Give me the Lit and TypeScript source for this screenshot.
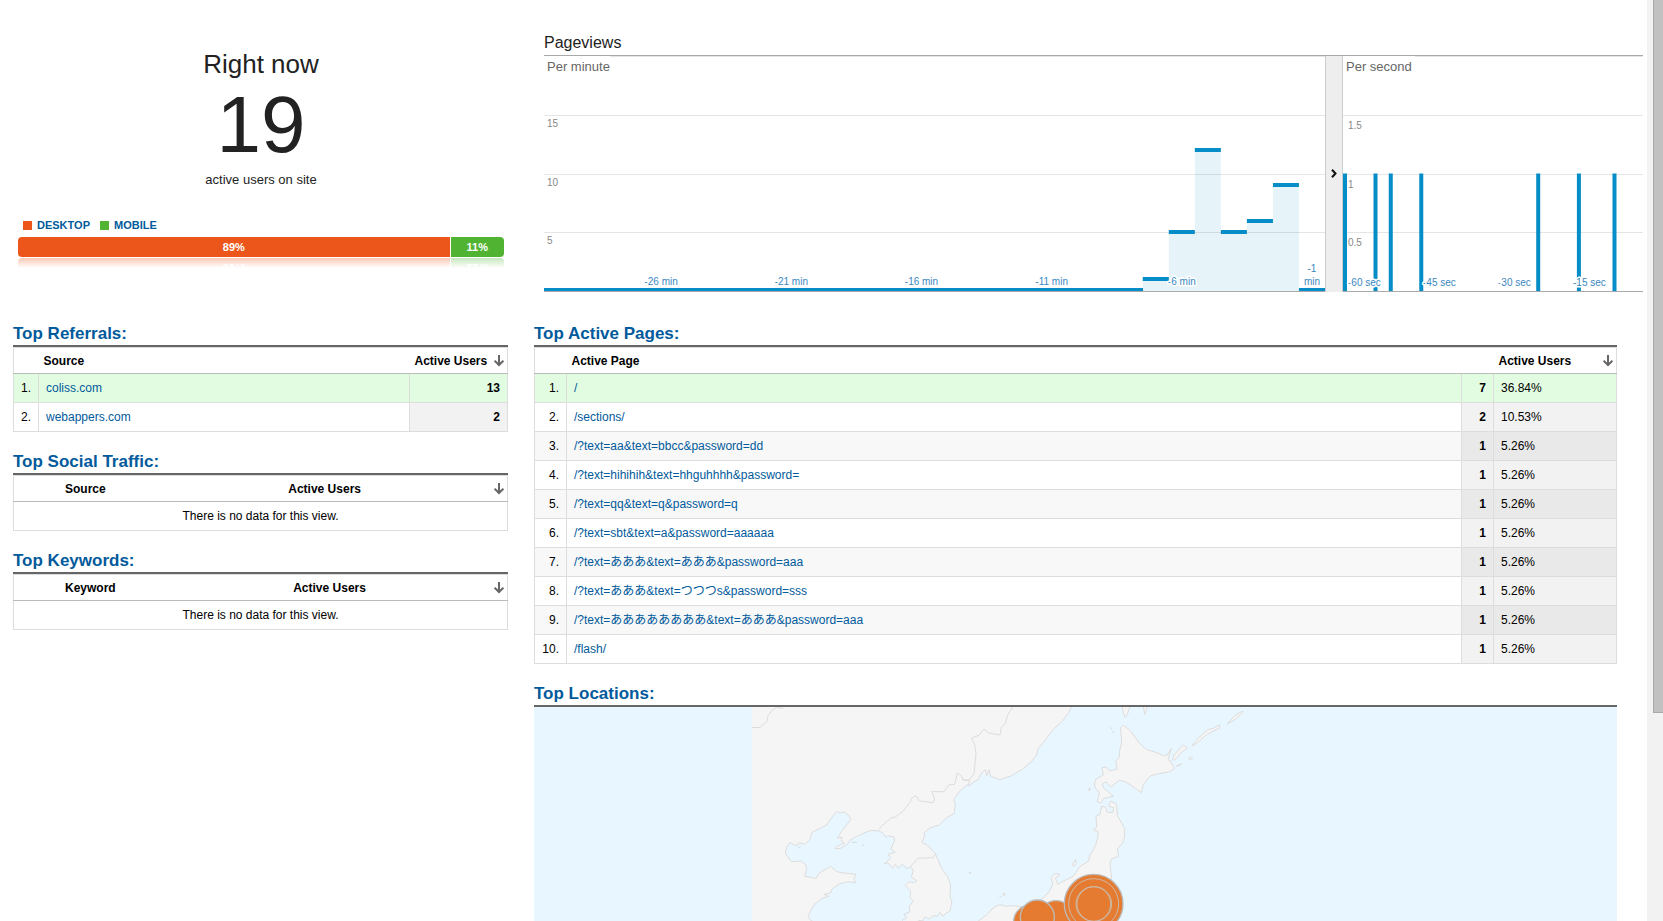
import { LitElement, html, svg, css } from "lit";
import { customElement, property } from "lit/decorators.js";

const FONT = css`"Liberation Sans", Arial, "Noto Sans CJK JP", sans-serif`;
const PLOT_H = 236;

const MINUTES = [...Array(22).fill(0), 1, 5, 12, 5, 6, 9, 0];
const MINUTE_SLOTS = 30;
const SECOND_SLOTS = 59;
const SECONDS = [0, 6, 9, 15, 38, 46, 53];

const headingStyles = css`
  .heading { margin: 0; padding: 0 0 1px; font-size: 17px; line-height: 20px; border-bottom: 2px solid #666; }
  a { color: #015a9c; text-decoration: none; }
`;

@customElement("sort-arrow")
class SortArrow extends LitElement {
  static styles = css`
    :host { display: inline-flex; vertical-align: middle; }
    .sort { display: flex; padding: 0; border: 0; background: none; cursor: pointer; }
  `;
  render() {
    return html`<button class="sort" aria-label="Sort by active users">
      <svg width="10" height="12" viewBox="0 0 10 12" fill="none" stroke="#666" stroke-width="2">
        <path d="M5 0v10M0.6 5.6 5 10l4.4-4.4" />
      </svg>
    </button>`;
  }
}

@customElement("pageviews-chart")
class PageviewsChart extends LitElement {
  static styles = css`
    :host { display: block; font-family: ${FONT}; }
    .title { margin: 0; padding: 0 0 3px; font-size: 16px; line-height: 18px; font-weight: 400; color: #222; border-bottom: 1px solid #aaa; }
    .plots { display: grid; grid-template-columns: minmax(0, 781fr) 18px minmax(0, 300fr); }
    .plot { display: block; width: 100%; height: 236px; }
    .divider { display: flex; align-items: center; justify-content: center; padding: 0 0 2px; border: 1px solid #ccc; border-width: 0 1px; background: #eee; cursor: pointer; }
    .grid { stroke: #000; stroke-opacity: 0.1; }
    .base { stroke: #aaa; }
    .name { font-size: 13px; fill: #666; }
    .value { font-size: 10px; fill: #888; }
    .tick { font-size: 10px; fill: #3a87c0; stroke: #fff; stroke-width: 3px; paint-order: stroke; stroke-linejoin: round; }
    .middle { text-anchor: middle; }
    .area { fill: #058dc7; fill-opacity: 0.1; }
    .mark { fill: #058dc7; }
  `;
  render() {
    const y = (v: number) => PLOT_H - 1 - (v * (PLOT_H - 1)) / 20;
    const pct = (i: number, of: number) => `${(i * 100) / of}%`;
    const lines = [5, 10, 15, 20].map((v) => svg`<line class="grid" x1="0" x2="100%" y1=${Math.round(y(v)) + 0.5} y2=${Math.round(y(v)) + 0.5} />`);
    const base = svg`<line class="base" x1="0" x2="100%" y1=${PLOT_H - 0.5} y2=${PLOT_H - 0.5} />`;
    const first = MINUTE_SLOTS - MINUTES.length;
    return html`
      <h2 class="title">Pageviews</h2>
      <div class="plots">
        <svg class="plot" role="img" aria-label="Pageviews per minute">
          ${lines} ${base}
          ${MINUTES.map((v, n) => svg`<rect class="area" x=${pct(n + first, MINUTE_SLOTS)} width=${pct(1, MINUTE_SLOTS)} y=${y(v)} height=${PLOT_H - 1 - y(v)} />`)}
          <rect class="mark" x="0" width="76.7%" y=${PLOT_H - 4} height="3" />
          ${MINUTES.map((v, n) => svg`<rect class="mark" x=${pct(n + first, MINUTE_SLOTS)} width=${pct(1, MINUTE_SLOTS)} y=${v ? Math.round(y(v)) - 2 : PLOT_H - 4} height=${v ? 4 : 3} />`)}
          <rect x="0" y="0" width="66" height="20" fill="#fff" />
          <text class="name" x="3" y="15">Per minute</text>
          ${[15, 10, 5].map((v) => svg`<text class="value" x="3" y=${Math.round(y(v)) + 12}>${v}</text>`)}
          ${[26, 21, 16, 11, 6].map((m) => svg`<text class="tick middle" x=${pct(MINUTE_SLOTS - m + 0.5, MINUTE_SLOTS)} y="229">-${m} min</text>`)}
          <text class="tick middle" x=${pct(29.5, 30)} y="216">-1</text>
          <text class="tick middle" x=${pct(29.5, 30)} y="229">min</text>
        </svg>
        <button class="divider" aria-label="Collapse per second chart">
          <svg width="6" height="9" viewBox="0 0 6 9" fill="none" stroke="#111" stroke-width="2"><path d="M1 0.7 4.5 4.5 1 8.3" /></svg>
        </button>
        <svg class="plot" role="img" aria-label="Pageviews per second">
          ${lines} ${base}
          ${SECONDS.map((s) => svg`<rect class="mark" x=${pct(s, SECOND_SLOTS)} width="4" y=${y(10)} height=${PLOT_H - 1 - y(10)} />`)}
          <rect x="0" y="0" width="72" height="20" fill="#fff" />
          <text class="name" x="3" y="15">Per second</text>
          ${[1.5, 1, 0.5].map((v) => svg`<text class="value" x="5" y=${Math.round(y(v * 10)) + 14}>${v}</text>`)}
          ${[60, 45, 30, 15].map((s) => svg`<text class="tick" x=${pct(s === 60 ? 1 : 61 - s, 60)} y="230">-${s} sec</text>`)}
        </svg>
      </div>
    `;
  }
}

@customElement("location-map")
class LocationMap extends LitElement {
  static styles = css`
    :host { display: block; background: #e8f6ff; }
    .map { display: block; width: 100%; }
    .land { fill: #f5f5f5; stroke: #dcdcdc; stroke-width: 3; stroke-linejoin: round; }
    .edge { fill: #f5f5f5; }
    .border { fill: none; stroke: #dcdcdc; stroke-width: 3; stroke-linejoin: round; }
    .pin { fill: #e47b30; stroke: #bbb; stroke-width: 4; }
    .ring { fill: none; stroke: #ccb9a6; stroke-width: 3; }
  `;
  render() {
    return html`<svg class="map" viewBox="534 706 1083 400" role="img" aria-label="Map of active users around Japan">
      <g transform="translate(740 700) scale(0.33333)">
        <path class="edge" d="M36 0H1000L994 18 985 36 968 60 940 85 915 118 893 145 890 162 874 182 848 204 815 224 780 236 760 230 752 222 747 206 740 224 722 215 714 236 700 243 680 252 660 270 641 296 646 310 642 338 620 350 598 372 572 380 553 394 553 408 545 424 562 432 586 458 604 500 622 526 632 552 630 588 636 600 630 630 608 645 592 636 575 650 555 652 536 663 520 668 497 668 500 650 510 632 508 616 520 600 510 590 512 570 496 554 506 542 526 545 514 528 520 510 510 498 488 490 462 500 444 486 434 488 452 470 444 460 466 454 452 444 464 420 462 408 444 404 430 398 418 390 392 388 372 396 350 406 330 418 322 430 302 434 298 446 286 443 290 436 306 434 304 420 294 412 304 392 320 372 332 356 328 346 312 332 290 332 278 346 260 372 216 394 210 416 196 430 180 426 166 434 150 424 140 438 136 456 154 482 184 480 196 490 200 505 194 526 228 532 238 516 262 502 272 496 290 512 312 516 348 520 344 544 328 542 300 548 276 564 266 582 246 592 222 612 204 644 210 656 222 664 230 1200H36Z"/>
        <path class="border" d="M994 18 985 36 968 60 940 85 915 118 893 145 890 162 874 182 848 204 815 224 780 236 762 229 752 226 747 206 740 224 736 206 722 220 714 236 700 243 690 254 680 252 660 270 641 296 646 310 642 338 620 350 598 372 572 380 553 394 553 408 545 424 562 432 586 458 604 500 622 526 632 552 630 588 636 600 630 630 620 636 608 645 600 634 592 646 580 644 568 654 555 648 548 660 536 658 530 670M497 668 486 658 500 650 492 640 510 632 508 616 520 600 510 590 512 570 496 554 506 542 522 545 530 540 514 528 520 510 512 496 500 504 488 490 474 502 466 490 458 502 444 486 434 488 452 470 444 460 466 454 452 444 464 420 462 408 444 404 438 410 430 398 418 390 392 388 372 396 350 406 330 418 322 430 302 442 286 443 290 436 314 426 304 420 306 408 292 412 304 392 320 372 332 356 328 346 312 332 304 336 290 332 278 346 260 372 216 394 210 416 196 430 180 426 166 434 150 424 140 438 136 456 154 482 184 480 196 490 200 505 194 526 228 532 238 516 262 502 272 496 290 512 312 516 330 518 348 520 342 534 346 546 328 542 300 548 276 564 272 576 252 580 266 586 246 592 222 612 204 644 210 656 222 664"/>
        <path class="border" d="M36 80 60 79 80 62 84 44 96 28 110 20 130 22M418 386 422 378 454 350 466 348 488 332 512 302 514 292 528 284 538 300 560 302 578 306 584 294 575 272 612 272 626 252 644 250 652 216 664 224 670 238 688 236 702 218 708 160 704 130 694 112 718 102 732 84 746 96 780 102 784 78 796 68 802 44 818 18M510 498 534 472 580 470 586 458M668 236 690 240 684 252"/>
        <path class="land" d="M1151 73 1142 79 1145 125 1139 148 1138 168 1127 182 1132 204 1110 210 1098 198 1086 200 1090 222 1068 234 1063 252 1068 264 1078 274 1072 302 1082 306 1092 292 1120 286 1104 272 1092 262 1086 250 1098 242 1112 258 1138 238 1156 242 1180 258 1204 275 1210 250 1232 224 1258 218 1290 212 1304 202 1296 190 1292 180 1284 176 1294 142 1282 162 1270 164 1248 154 1220 146 1198 126 1170 88Z"/>
        <path class="land" d="M1085 316 1080 340 1068 346 1070 378 1060 386 1074 392 1074 406 1066 436 1050 462 1046 480 1020 496 1000 526 970 540 954 550 946 532 960 520 944 518 934 530 938 550 926 574 906 594 880 610 850 618 820 614 795 616 792 613 774 612 756 624 742 640 726 652 700 672V760L1060 680 1090 590 1116 540 1110 490 1114 474 1136 466 1132 444 1148 426 1154 406 1154 382 1132 344 1130 310 1112 300 1106 316 1122 320 1118 334 1102 334 1096 318Z"/>
        <path class="land" d="M1147 16 1150 36 1156 49 1162 40 1170 16ZM1210 16 1214 40 1220 26 1220 16ZM1462 69 1482 46 1506 31 1510 32 1488 54ZM1356 134 1376 110 1404 86 1420 82 1438 72 1440 80 1416 92 1396 104 1372 126ZM1298 176 1302 162 1322 140 1330 132 1342 140 1322 156 1304 178ZM1345 172 1354 168 1358 172 1350 177ZM1308 196 1320 190 1326 188 1318 194ZM1110 76 1116 86M1116 90 1124 96M1044 266 1050 260 1050 268ZM998 490 1008 474 1006 482 1010 488 1000 496ZM687 515 692 513 690 518ZM778 590 784 584M788 580 794 576 794 584ZM334 424 350 424M366 432 372 434M174 440 182 436"/>
      </g>
      <g transform="translate(1000 700) scale(0.33333)">
        <circle class="pin" cx="91" cy="662" r="50"/>
        <circle class="pin" cx="168" cy="650" r="51"/>
        <circle class="pin" cx="112" cy="648" r="51"/>
        <circle class="pin" cx="281" cy="608" r="88"/>
        <circle class="ring" cx="281" cy="608" r="75"/>
        <circle class="ring" cx="280" cy="609" r="52"/>
        <circle class="ring" cx="283" cy="609" r="52"/>
      </g>
    </svg>`;
  }
}

interface Row { label: string; users: number; share?: string; }

@customElement("data-section")
class DataSection extends LitElement {
  @property() heading = "";
  @property() column = "";
  @property() kind = "list";
  @property({ attribute: false }) rows: Row[] = [];

  static styles = [headingStyles, css`
    :host { display: block; font-family: ${FONT}; font-size: 12px; line-height: 14px; color: #000; }
    .table { width: 100%; border-collapse: collapse; table-layout: fixed; }
    .table th, .table td { box-sizing: border-box; padding: 0 7px; border: 1px solid #ddd; height: 29px; text-align: left; }
    .table th { height: 26px; border-width: 1px 0; border-bottom-color: #bbb; padding: 0 5px; white-space: nowrap; }
    .table th:first-child { border-left: 1px solid #ddd; }
    .table th:last-child { border-right: 1px solid #ddd; padding-right: 3px; }
    .table .end { text-align: right; }
    .table .mid { text-align: center; }
    .index { width: 25px; }
    .wide .index { width: 32px; }
    .users { width: 98px; }
    .wide .users { width: 32px; }
    .share { width: 123px; }
    .table .num { font-weight: 700; text-align: right; background: #f2f2f2; }
    .pct { background: #f2f2f2; }
    .odd { background: #f8f8f8; }
    .odd .num, .odd .pct { background: #e9e9e9; }
    .lit, .lit .num, .lit .pct { background: #e1fce1; }
    .spread { display: flex; justify-content: space-between; align-items: center; }
    .source { width: 29%; }
    .keyword { width: 31%; }
    .table .icon { width: 15px; padding-left: 0; }
  `];

  private get head() {
    if (!this.rows.length) {
      return html`<tr>
        <th class="mid ${this.column === "Keyword" ? "keyword" : "source"}">${this.column}</th>
        <th class="mid">Active Users</th>
        <th class="end icon"><sort-arrow></sort-arrow></th>
      </tr>`;
    }
    if (this.kind === "wide") {
      return html`<tr><th class="index"></th><th>${this.column}</th><th class="users"></th>
        <th class="share"><div class="spread">Active Users<sort-arrow></sort-arrow></div></th></tr>`;
    }
    return html`<tr><th class="index"></th><th>${this.column}</th>
      <th class="users"><div class="spread">Active Users<sort-arrow></sort-arrow></div></th></tr>`;
  }

  render() {
    return html`
      <h2 class="heading"><a href="#">${this.heading}</a></h2>
      <table class="table ${this.kind}">
        <thead>${this.head}</thead>
        <tbody>
          ${this.rows.length
            ? this.rows.map((r, i) => html`<tr class=${i === 0 ? "lit" : i % 2 === 0 ? "odd" : ""}>
                <td class="end">${i + 1}.</td>
                <td><a href="#">${r.label}</a></td>
                <td class="num">${r.users}</td>
                ${r.share ? html`<td class="pct">${r.share}</td>` : null}
              </tr>`)
            : html`<tr><td class="mid" colspan="3">There is no data for this view.</td></tr>`}
        </tbody>
      </table>
    `;
  }
}

const REFERRALS: Row[] = [
  { label: "coliss.com", users: 13 },
  { label: "webappers.com", users: 2 },
];

const PAGES: Row[] = [
  { label: "/", users: 7, share: "36.84%" },
  { label: "/sections/", users: 2, share: "10.53%" },
  ...[
    "/?text=aa&text=bbcc&password=dd",
    "/?text=hihihih&text=hhguhhhh&password=",
    "/?text=qq&text=q&password=q",
    "/?text=sbt&text=a&password=aaaaaa",
    "/?text=あああ&text=あああ&password=aaa",
    "/?text=あああ&text=つつつs&password=sss",
    "/?text=ああああああああ&text=あああ&password=aaa",
    "/flash/",
  ].map((label) => ({ label, users: 1, share: "5.26%" })),
];

@customElement("app-root")
class AppRoot extends LitElement {
  static styles = [headingStyles, css`
    :host { display: flex; height: 100vh; overflow: hidden; background: #fff; font-family: ${FONT}; color: #222; }
    .page { flex: 1; min-width: 0; display: grid; grid-template-columns: minmax(0, 495fr) minmax(0, 1113fr); grid-template-rows: auto auto; align-content: start; column-gap: 26px; row-gap: 32px; padding-left: 13px; overflow: hidden; }
    .now { padding: 47px 4px 0 5px; text-align: center; }
    .caption { margin: 0; font-size: 26px; line-height: 34px; font-weight: 400; }
    .count { padding-top: 2px; font-size: 80px; line-height: 84px; }
    .note { font-size: 13px; line-height: 16px; padding-top: 5px; }
    .legend { display: flex; gap: 10px; padding: 30px 5px 5px; font-size: 11px; line-height: 14px; font-weight: 700; color: #015a9c; }
    .key { display: flex; align-items: center; gap: 5px; }
    .swatch { width: 9px; height: 9px; }
    .desktop { background: #ed561b; }
    .mobile { background: #50b432; }
    .bar { display: flex; gap: 1px; font-size: 11px; line-height: 20px; font-weight: 700; color: #fff; border-radius: 4px; overflow: hidden; }
    .mirror { margin-top: 1px; opacity: 0.32; mask-image: linear-gradient(#000, transparent 50%); }
    .mirror .bar { transform: scaleY(-1); }
    .chart { padding: 34px 4px 0 10px; }
    .stack { display: flex; flex-direction: column; gap: 20px; }
    .right { padding-right: 30px; }
    .scrollbar { width: 16px; flex: none; box-sizing: border-box; padding-left: 6px; background: #f2f2f2; }
    .thumb { height: 77.4%; box-sizing: border-box; background: #c1c1c1; border: 1px solid #a8a8a8; border-width: 0 0 1px 1px; }
  `];

  private bar() {
    return html`<div class="bar"><div class="desktop" style="flex: 89">89%</div><div class="mobile" style="flex: 11">11%</div></div>`;
  }

  render() {
    return html`
      <main class="page">
        <section class="now">
          <h1 class="caption">Right now</h1>
          <div class="count">19</div>
          <div class="note">active users on site</div>
          <div class="legend">
            <span class="key"><span class="swatch desktop"></span>DESKTOP</span>
            <span class="key"><span class="swatch mobile"></span>MOBILE</span>
          </div>
          ${this.bar()}
          <div class="mirror" aria-hidden="true">${this.bar()}</div>
        </section>
        <pageviews-chart class="chart"></pageviews-chart>
        <div class="stack">
          <data-section heading="Top Referrals:" column="Source" .rows=${REFERRALS}></data-section>
          <data-section heading="Top Social Traffic:" column="Source"></data-section>
          <data-section heading="Top Keywords:" column="Keyword"></data-section>
        </div>
        <div class="stack right">
          <data-section heading="Top Active Pages:" column="Active Page" kind="wide" .rows=${PAGES}></data-section>
          <section>
            <h2 class="heading"><a href="#">Top Locations:</a></h2>
            <location-map></location-map>
          </section>
        </div>
      </main>
      <div class="scrollbar" aria-hidden="true"><div class="thumb"></div></div>
    `;
  }
}
